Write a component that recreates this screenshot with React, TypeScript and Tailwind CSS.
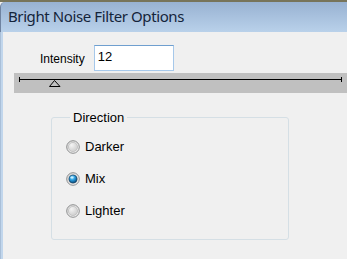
import React from "react";

function Radio({ checked }: { checked?: boolean }) {
  return (
    <svg width="14" height="14" viewBox="0 0 14 14" className="shrink-0">
      <defs>
        <linearGradient id="rOuter" x1="0" y1="0" x2="1" y2="1">
          <stop offset="0" stopColor="#d8d8d8" />
          <stop offset="1" stopColor="#fbfbfb" />
        </linearGradient>
        <radialGradient id="rInner" cx="0.35" cy="0.3" r="0.8">
          <stop offset="0" stopColor="#f4f4f4" />
          <stop offset="1" stopColor="#c9c9c9" />
        </radialGradient>
        <radialGradient id="rDot" cx="0.4" cy="0.3" r="0.75">
          <stop offset="0" stopColor="#9fe3ff" />
          <stop offset="0.45" stopColor="#2a9ee0" />
          <stop offset="1" stopColor="#07426f" />
        </radialGradient>
      </defs>
      <circle cx="7" cy="7" r="6.3" fill="url(#rOuter)" stroke="#8d8e8f" strokeWidth="1" />
      <circle cx="7" cy="7" r="4.6" fill="url(#rInner)" stroke="#b4b4b4" strokeWidth="0.6" />
      {checked && (
        <>
          <circle cx="7" cy="7" r="4" fill="url(#rDot)" stroke="#0c3c63" strokeWidth="0.6" />
          <ellipse cx="6" cy="5.4" rx="1.6" ry="1" fill="#d6f4ff" opacity="0.85" />
        </>
      )}
    </svg>
  );
}

export default function App() {
  const sans = { fontFamily: '"Liberation Sans", Arial, sans-serif' };
  return (
    <div className="w-[347px] h-[259px] overflow-hidden flex flex-col bg-[#f0f0f0]">
      <div className="h-[2px] bg-[#77745a] shrink-0" />
      <div
        className="h-[30px] shrink-0 flex items-center pl-[7px] bg-gradient-to-b from-[#98b2d2] to-[#b9d1ea] border-l border-[#6f83a0] rounded-tl-[5px] text-[#14243a] text-[15px] tracking-[-0.4px] leading-none pb-[2px]"
        style={{ fontFamily: '"Noto Sans", "Open Sans", sans-serif' }}
      >
        Bright Noise Filter Options
      </div>
      <div className="flex-1 flex">
        <div className="w-[3px] shrink-0 bg-[#c1d6ec] border-l border-[#a9bfd8]" />
        <div className="flex-1 bg-[#f0f0f0] flex flex-col" style={sans}>
          <div className="flex items-center mt-[13px] ml-[37px] h-[26px]">
            <span className="text-[12px] text-black leading-none mt-[1px]">Intensity</span>
            <div className="ml-[9px] w-[80px] h-[26px] bg-white border border-[#a6c8ea] border-t-[#6f9fcf] text-[13px] text-black pl-[3px] pt-[4px] leading-none">
              12
            </div>
          </div>
          <div className="mt-[2px] ml-[11px] h-[20px] bg-[#c0c0c0]">
            <svg width="333" height="20" viewBox="0 0 333 20">
              <line x1="5" y1="6.5" x2="327" y2="6.5" stroke="#000" strokeWidth="1" />
              <line x1="5.5" y1="4" x2="5.5" y2="9" stroke="#000" strokeWidth="1" />
              <line x1="327.5" y1="4" x2="327.5" y2="9" stroke="#000" strokeWidth="1" />
              <polygon points="40.5,7.5 35.5,13.5 46,13.5" fill="none" stroke="#000" strokeWidth="1" />
            </svg>
          </div>
          <fieldset className="mt-[17px] ml-[48px] w-[238px] h-[130px] border border-[#d5dfe5] rounded-[3px] pl-[14px]">
            <legend className="ml-[4px] px-[3px] text-[13px] leading-[15px] text-black">Direction</legend>
            <div className="flex flex-col gap-[18px] mt-[15px] text-[13px] text-black leading-[14px]">
              <label className="flex items-center gap-[5px]">
                <Radio />
                <span>Darker</span>
              </label>
              <label className="flex items-center gap-[5px]">
                <Radio checked />
                <span>Mix</span>
              </label>
              <label className="flex items-center gap-[5px]">
                <Radio />
                <span>Lighter</span>
              </label>
            </div>
          </fieldset>
        </div>
      </div>
    </div>
  );
}
